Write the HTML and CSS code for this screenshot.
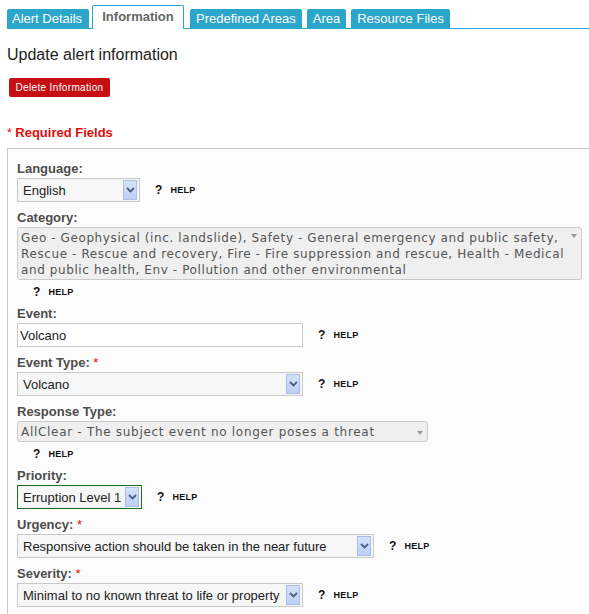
FILE: index.html
```html
<!DOCTYPE html>
<html>
<head>
<meta charset="utf-8">
<link rel="stylesheet" href="styles.css">
</head>
<body>
<nav class="tabs">
  <a class="tab">Alert Details</a>
  <a class="tab active">Information</a>
  <a class="tab">Predefined Areas</a>
  <a class="tab">Area</a>
  <a class="tab">Resource Files</a>
</nav>
<h2 class="title">Update alert information</h2>
<button class="btn-delete">Delete Information</button>
<p class="required"><span class="star">*</span> Required Fields</p>
<div class="panel">
  <div class="field">
    <div class="label">Language:</div>
    <div class="row">
      <div class="select w-lang"><span class="val">English</span><span class="arrow"><svg width="9" height="6" viewBox="0 0 9 6"><path d="M1 1 L4.5 4.5 L8 1" fill="none" stroke="#4a5f86" stroke-width="1.8"/></svg></span></div>
      <span class="help"><b>?</b>HELP</span>
    </div>
  </div>
  <div class="field">
    <div class="label">Category:</div>
    <div class="multi w-cat">Geo - Geophysical (inc. landslide), Safety - General emergency and public safety, Rescue - Rescue and recovery, Fire - Fire suppression and rescue, Health - Medical and public health, Env - Pollution and other environmental<span class="tri"></span></div>
    <div class="help-below"><span class="help"><b>?</b>HELP</span></div>
  </div>
  <div class="field">
    <div class="label">Event:</div>
    <div class="row">
      <div class="input w-event">Volcano</div>
      <span class="help"><b>?</b>HELP</span>
    </div>
  </div>
  <div class="field">
    <div class="label">Event Type: <span class="req">*</span></div>
    <div class="row">
      <div class="select w-event"><span class="val">Volcano</span><span class="arrow"><svg width="9" height="6" viewBox="0 0 9 6"><path d="M1 1 L4.5 4.5 L8 1" fill="none" stroke="#4a5f86" stroke-width="1.8"/></svg></span></div>
      <span class="help"><b>?</b>HELP</span>
    </div>
  </div>
  <div class="field">
    <div class="label">Response Type:</div>
    <div class="multi single w-resp">AllClear - The subject event no longer poses a threat<span class="tri"></span></div>
    <div class="help-below extra"><span class="help"><b>?</b>HELP</span></div>
  </div>
  <div class="field">
    <div class="label">Priority:</div>
    <div class="row">
      <div class="select focus w-prio"><span class="val">Erruption Level 1</span><span class="arrow"><svg width="9" height="6" viewBox="0 0 9 6"><path d="M1 1 L4.5 4.5 L8 1" fill="none" stroke="#4a5f86" stroke-width="1.8"/></svg></span></div>
      <span class="help"><b>?</b>HELP</span>
    </div>
  </div>
  <div class="field">
    <div class="label">Urgency: <span class="req">*</span></div>
    <div class="row">
      <div class="select w-urg"><span class="val">Responsive action should be taken in the near future</span><span class="arrow"><svg width="9" height="6" viewBox="0 0 9 6"><path d="M1 1 L4.5 4.5 L8 1" fill="none" stroke="#4a5f86" stroke-width="1.8"/></svg></span></div>
      <span class="help"><b>?</b>HELP</span>
    </div>
  </div>
  <div class="field">
    <div class="label">Severity: <span class="req">*</span></div>
    <div class="row">
      <div class="select w-event"><span class="val">Minimal to no known threat to life or property</span><span class="arrow"><svg width="9" height="6" viewBox="0 0 9 6"><path d="M1 1 L4.5 4.5 L8 1" fill="none" stroke="#4a5f86" stroke-width="1.8"/></svg></span></div>
      <span class="help"><b>?</b>HELP</span>
    </div>
  </div>
</div>
</body>
</html>
```
FILE: styles.css
```css
html, body { margin: 0; padding: 0; background: #fff; overflow: hidden; }
body {
  font-family: "Liberation Sans", Arial, sans-serif;
  font-size: 13px;
  color: #222;
  padding: 5px 0 0 7px;
}
.tabs {
  display: flex;
  align-items: flex-end;
  gap: 5px;
  border-bottom: 1px solid #2ba6cb;
  height: 23px;
}
.tab {
  background: #2ba6cb;
  color: #fff;
  font-size: 13px;
  height: 19px;
  line-height: 19px;
  padding: 0 6px;
  border-radius: 2px 2px 0 0;
  cursor: pointer;
}
.tab:first-child { width: 71px; padding: 0 6px 0 5px; margin-right: -2px; }
.tab.active {
  background: #fff;
  color: #666;
  font-weight: bold;
  line-height: 21px;
  border: 1px solid #2ba6cb;
  border-bottom: none;
  padding: 0 7px;
  margin-bottom: -1px;
  height: 24px;
  box-sizing: border-box;
  width: 92px;
  text-align: center;
  margin-right: 1px;
}
.title {
  font-size: 16px;
  font-weight: normal;
  color: #222;
  margin: 16px 0 0 0;
  line-height: 20px;
}
.btn-delete {
  display: block;
  margin: 13px 0 0 2px;
  background: #c60f13;
  color: #fff;
  border: none;
  border-radius: 2px;
  width: 101px;
  height: 19px;
  padding: 0;
  font-family: "Liberation Sans", Arial, sans-serif;
  font-size: 10px;
  letter-spacing: 0.35px;
  line-height: 19px;
}
.required {
  margin: 28px 0 0 0;
  color: #e10d0d;
  font-weight: bold;
  font-size: 13px;
  line-height: 16px;
}
.required .star { font-weight: normal; font-size: 12px; }
.panel {
  margin-top: 7px;
  border: 1px solid #c8c8c8;
  border-right: none;
  background: #fcfcfc;
  padding: 12px 0 20px 9px;
}
.field { margin-bottom: 8px; }
.label {
  font-weight: bold;
  color: #4d4d4d;
  font-size: 13px;
  line-height: 16px;
  margin-bottom: 1px;
}
.req { color: #e10d0d; font-weight: normal; }
.row { display: flex; align-items: center; }
.select, .input {
  box-sizing: border-box;
  height: 24px;
  border: 1px solid #c9c9c9;
  background: #f6f6f6;
  display: flex;
  align-items: center;
  font-size: 13px;
  color: #222;
  position: relative;
}
.select .val { padding-left: 5px; flex: 1; white-space: nowrap; overflow: hidden; }
.select.focus { border-color: #1f6e1f; }
.arrow {
  width: 14px;
  height: 20px;
  margin-right: 2px;
  box-sizing: border-box;
  border: 1px solid #a9bde8;
  background: linear-gradient(#d6e2fb, #bccff5);
  display: flex;
  align-items: center;
  justify-content: center;
}
.input { background: #fff; padding-left: 2px; }
.w-lang { width: 123px; }
.w-event { width: 286px; }
.w-prio { width: 125px; }
.w-urg { width: 357px; }
.w-cat { width: 565px; }
.w-resp { width: 411px; }
.help {
  margin-left: 15px;
  font-weight: bold;
  font-size: 9px;
  color: #111;
  display: inline-flex;
  align-items: center;
  letter-spacing: 0.2px;
}
.help b { font-size: 12px; margin-right: 8px; }
.help-below { padding-left: 1px; height: 12px; margin-top: 6px; display: flex; align-items: center; }
.help-below.extra { margin-bottom: 6px; }
.multi {
  box-sizing: border-box;
  border: 1px solid #cbcbcb;
  border-radius: 3px;
  background: #efefef;
  font-family: "DejaVu Sans", Verdana, sans-serif;
  font-size: 12px;
  letter-spacing: 0.6px;
  line-height: 16px;
  color: #555;
  padding: 2px 2px 1px 3px;
  position: relative;
}
.multi.single { height: 21px; padding-top: 2px; white-space: nowrap; letter-spacing: 0.7px; }
.tri {
  position: absolute;
  right: 4px;
  top: 6px;
  width: 0; height: 0;
  border-left: 3px solid transparent;
  border-right: 3px solid transparent;
  border-top: 4px solid #999;
}
.multi.single .tri { top: 9px; }
```
